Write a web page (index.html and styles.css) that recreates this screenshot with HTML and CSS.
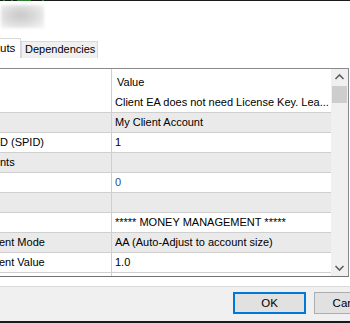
FILE: index.html
```html
<!DOCTYPE html>
<html>
<head>
<meta charset="utf-8">
<link rel="stylesheet" href="styles.css">
</head>
<body>
<div class="win">
  <div class="topstrip"></div>
  <div class="titlebar"><div class="blurred"></div></div>
  <div class="tabs">
    <div class="tab active">uts</div>
    <div class="tab">Dependencies</div>
    <div class="tabfill"></div>
  </div>
  <div class="page">
    <div class="list">
      <div class="rows">
        <div class="row header"><div class="name"></div><div class="val hval">Value</div></div>
        <div class="row"><div class="name"></div><div class="val">Client EA does not need License Key. Lea...</div></div>
        <div class="row alt"><div class="name"></div><div class="val">My Client Account</div></div>
        <div class="row"><div class="name">D (SPID)</div><div class="val">1</div></div>
        <div class="row alt"><div class="name">nts</div><div class="val"></div></div>
        <div class="row"><div class="name"></div><div class="val blue">0</div></div>
        <div class="row alt"><div class="name"></div><div class="val"></div></div>
        <div class="row"><div class="name"></div><div class="val">***** MONEY MANAGEMENT *****</div></div>
        <div class="row alt"><div class="name cut">ent Mode</div><div class="val">AA (Auto-Adjust to account size)</div></div>
        <div class="row"><div class="name cut">ent Value</div><div class="val">1.0</div></div>
        <div class="row last"><div class="name"></div><div class="val"></div></div>
      </div>
      <div class="scrollbar">
        <div class="sbtn">
          <svg width="17" height="17" viewBox="0 0 17 17"><path d="M4.5 10 L8.5 6 L12.5 10" fill="none" stroke="#606060" stroke-width="1.6"/></svg>
        </div>
        <div class="thumb"></div>
        <div class="track"></div>
        <div class="sbtn">
          <svg width="17" height="17" viewBox="0 0 17 17"><path d="M4.5 7 L8.5 11 L12.5 7" fill="none" stroke="#606060" stroke-width="1.6"/></svg>
        </div>
      </div>
    </div>
  </div>
  <div class="footer">
    <button class="btn default">OK</button>
    <button class="btn">Cancel</button>
  </div>
  <div class="bottomline"></div>
</div>
</body>
</html>
```
FILE: styles.css
```css
html, body {
  margin: 0;
  padding: 0;
  background: #ffffff;
}
body {
  width: 350px;
  height: 323px;
  overflow: hidden;
  font-family: "Liberation Sans", Arial, sans-serif;
  font-size: 11px;
  color: #000;
}
.win {
  width: 350px;
  height: 323px;
  display: flex;
  flex-direction: column;
  overflow: hidden;
}
.topstrip {
  height: 1px;
  background:
    linear-gradient(to right,
      #1b1b1b 0, #1b1b1b 3px, #2f7d2f 3px, #2f7d2f 5px,
      #1b1b1b 5px, #1b1b1b 11px, #2f7d2f 11px, #2f7d2f 13px,
      #1b1b1b 13px, #1b1b1b 17px, #2f7d2f 17px, #2f7d2f 31px,
      #1b1b1b 31px, #1b1b1b 42px, #2f7d2f 42px, #2f7d2f 44px,
      #1b1b1b 44px);
}
.titlebar {
  height: 37px;
  background: #fff;
  padding: 4px 0 0 1px;
  box-sizing: border-box;
}
.blurred {
  width: 43px;
  height: 23px;
  background: radial-gradient(ellipse at 45% 45%, #c9c9c9 0, #d9d9d9 40%, #ebebeb 75%, #f5f5f5 100%);
  filter: blur(1.5px);
}
.tabs {
  height: 20px;
  display: flex;
  align-items: flex-end;
}
.tab {
  box-sizing: border-box;
  height: 17px;
  padding: 0 2px 0 3px;
  line-height: 15px;
  background: #f0f0f0;
  border: 1px solid #d9d9d9;
  border-bottom: none;
  font-size: 11px;
}
.tab.active {
  height: 20px;
  background: #fff;
  width: 21px;
  padding: 0;
  line-height: 19px;
  border-left: none;
  border-top: 1px solid #d9d9d9;
  border-right: 1px solid #d9d9d9;
  font-size: 11.5px;
}
.tabfill {
  flex: 1;
}
.page {
  background: #fff;
  height: 229px;
  box-sizing: border-box;
  padding: 10px 1px 0 0;
  border-bottom: 1px solid #dadada;
}
.list {
  display: flex;
  height: 209px;
  box-sizing: border-box;
  border: 1px solid #8a8a8a;
  border-left: none;
  border-bottom-color: #727272;
  border-right-color: #828790;
}
.rows {
  flex: 1;
  overflow: hidden;
  display: flex;
  flex-direction: column;
}
.row {
  display: flex;
  height: 20px;
  box-sizing: border-box;
  border-bottom: 1px solid #cfcfcf;
  background: #fff;
  line-height: 19px;
  flex-shrink: 0;
}
.row.alt {
  background: #eaeaea;
}
.row.header {
  height: 24px;
  border-bottom: none;
  line-height: 26px;
}
.row.last {
  border-bottom: none;
  flex: 1;
}
.name {
  width: 111px;
  flex-shrink: 0;
  border-right: 1px solid #cfcfcf;
  white-space: nowrap;
  overflow: hidden;
}
.name.cut {
  text-indent: -1px;
}
.val {
  flex: 1;
  padding-left: 3px;
  white-space: nowrap;
  overflow: hidden;
}
.hval {
  padding-left: 5px;
}
.blue {
  color: #1b4f86;
}
.scrollbar {
  width: 17px;
  flex-shrink: 0;
  background: #f0f0f0;
  display: flex;
  flex-direction: column;
}
.sbtn {
  height: 17px;
  flex-shrink: 0;
}
.sbtn svg {
  display: block;
}
.thumb {
  height: 17px;
  margin: 0 1px;
  background: #cdcdcd;
  flex-shrink: 0;
}
.track {
  flex: 1;
}
.footer {
  flex: 1;
  background: #f0f0f0;
  display: flex;
  gap: 8px;
  padding: 5px 0 0 233px;
  box-sizing: border-box;
}
.btn {
  flex-shrink: 0;
  width: 73px;
  height: 22px;
  box-sizing: border-box;
  background: #e1e1e1;
  border: 1px solid #adadad;
  font-family: "Liberation Sans", Arial, sans-serif;
  font-size: 11.5px;
  color: #000;
  padding: 0;
  margin: 0;
  line-height: 18px;
}
.btn.default {
  border: 2px solid #0078d7;
}
.bottomline {
  height: 2px;
  background: #1a1a1a;
}
```
